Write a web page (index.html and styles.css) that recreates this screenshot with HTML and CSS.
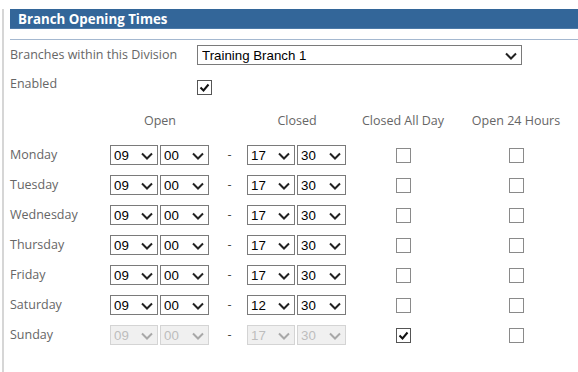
FILE: index.html
```html
<!DOCTYPE html>
<html lang="en">
<head>
    <meta charset="UTF-8">
    <title>Branch Opening Times</title>
    <link rel="stylesheet" href="styles.css">
</head>
<body>

    <div class="page">
        <h2 class="panel-title">Branch Opening Times</h2>
        <div class="title-rule"></div>

        <div class="field-row">
            <label class="field-label" for="branch">Branches within this Division</label>
            <span class="select-wrap wide">
                <select id="branch">
                    <option>Training Branch 1</option>
                    <option>Training Branch 2</option>
                </select>
                <svg class="chev" viewBox="0 0 12 8"><path d="M1 1.5 L6 6.5 L11 1.5"/></svg>
            </span>
        </div>

        <div class="field-row enabled-row">
            <label class="field-label" for="enabled">Enabled</label>
            <label class="check">
                <input type="checkbox" id="enabled" checked>
                <svg viewBox="0 0 15 15"><path d="M3.5 7.5 L6.5 10.5 L11.5 4.5"/></svg>
            </label>
        </div>

        <div class="times" id="times">
            <div class="col-head"></div>
            <div class="col-head">Open</div>
            <div class="col-head"></div>
            <div class="col-head">Closed</div>
            <div class="col-head">Closed All Day</div>
            <div class="col-head">Open 24 Hours</div>
        </div>
    </div>

    <script>
        var days = [
            ["Monday", "09", "00", "17", "30", false],
            ["Tuesday", "09", "00", "17", "30", false],
            ["Wednesday", "09", "00", "17", "30", false],
            ["Thursday", "09", "00", "17", "30", false],
            ["Friday", "09", "00", "17", "30", false],
            ["Saturday", "09", "00", "12", "30", false],
            ["Sunday", "09", "00", "17", "30", true]
        ];

        var chev = '<svg class="chev" viewBox="0 0 12 8"><path d="M1 1.5 L6 6.5 L11 1.5"/></svg>';
        var tick = '<svg viewBox="0 0 15 15"><path d="M3.5 7.5 L6.5 10.5 L11.5 4.5"/></svg>';

        function timeSelect(value, disabled) {
            return '<span class="select-wrap small' + (disabled ? ' disabled' : '') + '">' +
                '<select' + (disabled ? ' disabled' : '') + '><option>' + value + '</option></select>' +
                chev + '</span>';
        }

        function checkBox(checked) {
            return '<label class="check"><input type="checkbox"' + (checked ? ' checked' : '') + '>' + tick + '</label>';
        }

        var grid = document.getElementById("times");
        var html = "";
        days.forEach(function (d) {
            var off = d[5];
            html += '<div class="day">' + d[0] + '</div>';
            html += '<div class="pair">' + timeSelect(d[1], off) + timeSelect(d[2], off) + '</div>';
            html += '<div class="dash">-</div>';
            html += '<div class="pair">' + timeSelect(d[3], off) + timeSelect(d[4], off) + '</div>';
            html += '<div class="cell">' + checkBox(off) + '</div>';
            html += '<div class="cell">' + checkBox(false) + '</div>';
        });
        grid.insertAdjacentHTML("beforeend", html);
    </script>

</body>
</html>
```

FILE: styles.css
```css
* {
    box-sizing: border-box;
    margin: 0;
    padding: 0;
}

body {
    background: white;
    font-family: "Open Sans", sans-serif;
    font-size: 12.5px;
    color: #666;
    overflow: hidden;
}

.page {
    margin-left: 2px;
    border-left: 2px solid #d6d6d6;
    padding-left: 6px;
    min-height: 372px;
}

.panel-title {
    margin-top: 9px;
    height: 20px;
    line-height: 20px;
    padding-left: 8px;
    background: #336699;
    border-bottom: 1px solid #4d7aa8;
    color: white;
    font-size: 13.3px;
    font-weight: bold;
}

.title-rule {
    margin-top: 10px;
    height: 1px;
    background: #a4b8d0;
}

.field-row {
    display: flex;
    align-items: center;
    margin-top: 5px;
    height: 20px;
}

.field-label {
    width: 187px;
    line-height: 16px;
}

.enabled-row {
    margin-top: 11px;
    align-items: flex-start;
}

.enabled-row .check {
    margin-top: 4px;
}

/* selects */
.select-wrap {
    position: relative;
    display: inline-block;
    height: 20px;
}

.select-wrap select {
    appearance: none;
    -webkit-appearance: none;
    width: 100%;
    height: 20px;
    border: 1px solid #7a7a7a;
    background: white;
    color: black;
    font-family: "Liberation Sans", Arial, sans-serif;
    font-size: 13.3px;
    padding: 0 0 0 4px;
    border-radius: 0;
    outline: none;
}

.select-wrap.wide {
    width: 325px;
}

.select-wrap.small {
    width: 48px;
}

.select-wrap.small + .select-wrap.small {
    width: 49px;
    margin-left: 2px;
}

.select-wrap.small select {
    padding-left: 3px;
}

.chev {
    position: absolute;
    right: 5px;
    top: 7px;
    width: 12px;
    height: 8px;
    pointer-events: none;
}

.chev path {
    fill: none;
    stroke: #222;
    stroke-width: 2;
}

.select-wrap.disabled select {
    background: #ebebeb;
    border-color: #c3c3c3;
    color: #a2a2a2;
}

.select-wrap.disabled .chev path {
    stroke: #a8a8a8;
}

/* checkboxes */
.check {
    position: relative;
    display: inline-block;
    width: 15px;
    height: 15px;
}

.check input {
    appearance: none;
    -webkit-appearance: none;
    display: block;
    width: 15px;
    height: 15px;
    border: 1px solid #8a8a8a;
    background: white;
    margin: 0;
}

.check input:checked {
    border-color: #555;
}

.check svg {
    position: absolute;
    left: 0;
    top: 0;
    width: 15px;
    height: 15px;
    display: none;
    pointer-events: none;
}

.check input:checked + svg {
    display: block;
}

.check svg path {
    fill: none;
    stroke: #111;
    stroke-width: 2;
}

/* times grid */
.times {
    display: grid;
    grid-template-columns: 100px 100px 37px 100px 112px 114px;
    grid-auto-rows: 30px;
    margin-top: 14px;
}

.col-head {
    text-align: center;
    line-height: 16px;
    padding-top: 3px;
    height: 27px;
}

.day {
    line-height: 30px;
}

.pair {
    display: flex;
    align-items: center;
}

.dash {
    text-align: center;
    line-height: 30px;
    color: #444;
    padding-left: 2px;
}

.cell {
    display: flex;
    justify-content: center;
    align-items: center;
}
```
